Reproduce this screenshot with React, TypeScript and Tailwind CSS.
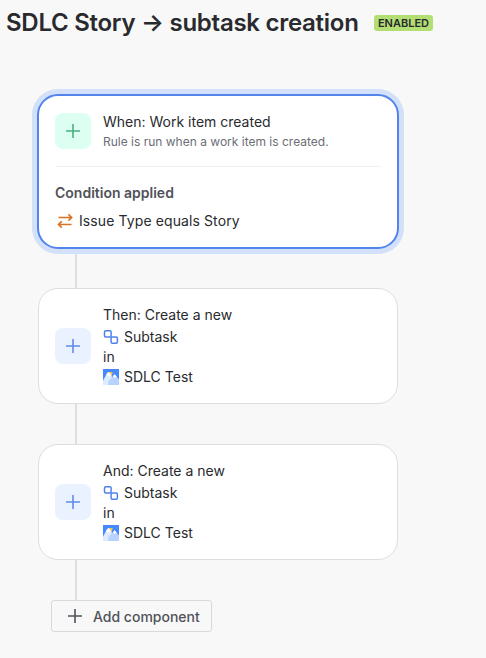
const PlusIcon = ({ className = '' }: { className?: string }) => (
  <svg className={className} width="14" height="14" viewBox="0 0 14 14" fill="none" stroke="currentColor" strokeWidth="1.6">
    <path d="M7 0v14M0 7h14" />
  </svg>
);

const SwapIcon = () => (
  <svg width="20" height="16" viewBox="0 0 20 16" fill="none" stroke="#d97224" strokeWidth="1.6">
    <path d="M3.5 4.5h13.2M13.4 1.4l3.3 3.1-3.3 3.1M16.5 11.5H3.4M6.8 8.4l-3.3 3.1 3.3 3.1" />
  </svg>
);

const SubtaskIcon = () => (
  <svg width="16" height="16" viewBox="0 0 16 16" fill="none" stroke="#5083ea" strokeWidth="1.5">
    <rect x="1.5" y="1.7" width="6.6" height="6.3" rx="1.2" />
    <rect x="8.1" y="8" width="6.3" height="6.3" rx="1.2" />
  </svg>
);

const ProjectAvatar = () => (
  <svg width="16" height="16" viewBox="0 0 16 16">
    <path d="M0 0h16v16H0z" fill="#4688ff" />
    <path d="M5.5 3h4.2l-.9 3.4L7 7z" fill="#f0c64c" />
    <path d="M0 11.5l4-7Q5 3 6 3.5l1.4 1.2L10 10l-3 6H0z" fill="#dfebfe" />
    <path d="M5.5 12l5-5.5 1-1.3 1.2 1.3L16 10.5V16H5z" fill="#b8d3ff" />
    <path d="M3.1 6l1.4-2.3Q5.4 3 6.3 3.7l1.2 1.5 1 2-1.1-.6-1.1 1-1-1.2-1.4 1zM10 7.3l1.5-2.1L13.2 7l.7 1.5-1.2-.5-1.2 1.1z" fill="#fff" />
  </svg>
);

function Connector({ className }: { className: string }) {
  return <div className={`ml-[75px] w-0.5 bg-[#dddee1] ${className}`} />;
}

function ActionCard({ title }: { title: string }) {
  return (
    <div className="ml-[38px] flex h-[116px] w-[360px] items-center rounded-[20px] border border-[#dddee1] bg-white pl-4">
      <div className="flex size-9 items-center justify-center rounded-lg bg-[#e9f2fe] text-[#5f8cec]">
        <PlusIcon />
      </div>
      <div className="ml-3 text-[14px] leading-5">
        <div className="mb-0.5">{title}</div>
        <div className="flex items-center gap-[5px]">
          <SubtaskIcon />
          <span>Subtask</span>
        </div>
        <div>in</div>
        <div className="flex items-center gap-[5px]">
          <ProjectAvatar />
          <span>SDLC Test</span>
        </div>
      </div>
    </div>
  );
}

export default function App() {
  return (
    <div className="h-[658px] w-[486px] overflow-hidden bg-[#f8f8f8] font-['Inter',sans-serif] text-[#292a2e]">
      <header className="flex h-[94px] items-start pl-1.5 pt-2">
        <h1 className="w-[352px] whitespace-nowrap pt-px text-[24px] font-semibold leading-7 tracking-[-0.27px]">
          SDLC Story → subtask creation
        </h1>
        <span className="ml-4 mt-[7px] flex h-4 w-[59px] items-center justify-center rounded-[3px] bg-[#b3df72] text-[11px] font-semibold">
          ENABLED
        </span>
      </header>

      <div className="ml-[37px] h-[155px] w-[362px] rounded-[21px] border-2 border-[#5384ec] bg-white px-4 pt-[17px] ring-5 ring-[#d2e0fa]">
        <div className="flex h-[54px] border-b border-[#f0f1f2]">
          <div className="flex size-9 items-center justify-center rounded-lg bg-[#dcfff1] text-[#4baf80]">
            <PlusIcon />
          </div>
          <div className="ml-3 -mt-px">
            <div className="text-[14px] leading-5">When: Work item created</div>
            <div className="text-[12px] leading-5 text-[#6b6e76]">Rule is run when a work item is created.</div>
          </div>
        </div>
        <div className="mt-4 text-[14px] font-semibold leading-5 text-[#505258]">Condition applied</div>
        <div className="mt-2 flex items-center gap-1 text-[14px] leading-5">
          <SwapIcon />
          <span className="tracking-[0.1px]">Issue Type equals Story</span>
        </div>
      </div>

      <Connector className="mt-[5px] h-[34px]" />
      <ActionCard title="Then: Create a new" />
      <Connector className="h-10" />
      <ActionCard title="And: Create a new" />
      <Connector className="h-10" />

      <button className="ml-[51px] flex h-8 w-[161px] items-center rounded-[3px] border border-[#d8d9dc] pl-4 text-[14px] font-medium text-[#505258]">
        <PlusIcon />
        <span className="ml-[11px]">Add component</span>
      </button>
    </div>
  );
}
